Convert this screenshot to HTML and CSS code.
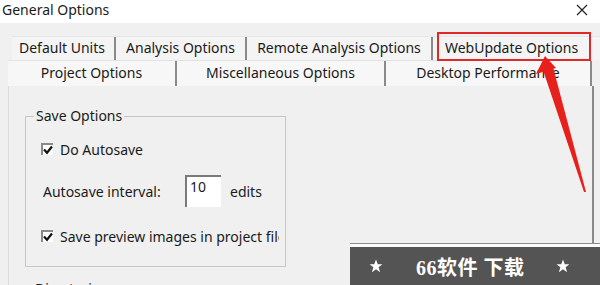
FILE: index.html
```html
<!DOCTYPE html>
<html lang="en">
<head>
  <meta charset="UTF-8">
  <meta name="viewport" content="width=device-width, initial-scale=1.0">
  <title>General Options</title>
  <link rel="stylesheet" href="styles.css">
</head>
<body>
  <div class="window">
    <div class="titlebar">
      <span class="title">General Options</span>
      <svg class="close" width="12" height="12" viewBox="0 0 12 12">
        <path d="M1 1 L11 11 M11 1 L1 11" stroke="#222" stroke-width="1.2" fill="none"/>
      </svg>
    </div>

    <div class="tabs">
      <div class="tab-row row-back">
        <div class="tab t-units">Default Units</div>
        <div class="tab t-analysis">Analysis Options</div>
        <div class="tab t-remote">Remote Analysis Options</div>
        <div class="tab t-web">WebUpdate Options</div>
      </div>
      <div class="tab-row row-front">
        <div class="tab t-project">Project Options</div>
        <div class="tab t-misc">Miscellaneous Options</div>
        <div class="tab t-desktop">Desktop Performance</div>
      </div>
    </div>

    <div class="page">
      <fieldset class="group">
        <legend>Save Options</legend>
        <div class="check-row">
          <span class="checkbox">
            <svg width="12" height="12" viewBox="0 0 12 12">
              <path d="M2 5.5 L5 8.8 L10 2.5" stroke="#111" stroke-width="2.2" fill="none"/>
            </svg>
          </span>
          <span>Do Autosave</span>
        </div>
        <div class="field-row">
          <span class="field-label">Autosave interval:</span>
          <span class="num-input">10</span>
          <span>edits</span>
        </div>
        <div class="check-row">
          <span class="checkbox">
            <svg width="12" height="12" viewBox="0 0 12 12">
              <path d="M2 5.5 L5 8.8 L10 2.5" stroke="#111" stroke-width="2.2" fill="none"/>
            </svg>
          </span>
          <span class="clip">Save preview images in project files</span>
        </div>
      </fieldset>
      <div class="next-group">Directories</div>
    </div>

    <div class="highlight"></div>
    <svg class="arrow" width="600" height="285" viewBox="0 0 600 285">
      <polygon points="545,56 536,74 556,68" fill="#e8201c"/>
      <polygon points="543,70 553,67 586,192 584,192" fill="#e8201c"/>
    </svg>

    <div class="watermark">
      <svg class="star" width="14" height="14" viewBox="0 0 24 24">
        <polygon points="12,1 15,9 23,9 16.5,14 19,22.5 12,17.5 5,22.5 7.5,14 1,9 9,9" fill="#fff"/>
      </svg>
      <span class="wm-text">66软件 下载</span>
      <svg class="star" width="14" height="14" viewBox="0 0 24 24">
        <polygon points="12,1 15,9 23,9 16.5,14 19,22.5 12,17.5 5,22.5 7.5,14 1,9 9,9" fill="#fff"/>
      </svg>
    </div>
  </div>
</body>
</html>
```

FILE: styles.css
```css
body {
  margin: 0;
  font-family: "Noto Sans", "Open Sans", sans-serif;
  font-size: 14px;
  color: #1a1a1a;
}
.window {
  position: relative;
  width: 600px;
  height: 285px;
  overflow: hidden;
  background: #f0f0f0;
}
.titlebar {
  height: 23px;
  background: #fff;
  display: flex;
  align-items: center;
  justify-content: space-between;
  padding: 0 12px 4px 2px;
  box-sizing: border-box;
}
.title {
  font-size: 14px;
}
.tabs {
  padding-top: 13px;
}
.tab-row {
  display: flex;
}
.row-back {
  margin-left: 12px;
  height: 24px;
  background: #f4f4f4;
  border-top: 1px solid #e6e6e6;
  box-sizing: border-box;
}
.row-front {
  margin-left: 8px;
  width: 584px;
  height: 26px;
  background: #f7f7f7;
  border-top: 1px solid #e2e2e2;
  box-sizing: border-box;
}
.tab {
  display: flex;
  align-items: center;
  justify-content: center;
  box-sizing: border-box;
  white-space: nowrap;
}
.row-back .tab {
  padding-bottom: 3px;
}
.row-front .tab {
  padding-bottom: 2px;
}
.t-units { width: 104px; border-right: 2px solid #8a8a8a; padding-right: 2px; }
.t-analysis { width: 131px; border-right: 2px solid #8a8a8a; }
.t-remote { width: 186px; border-right: 2px solid #8a8a8a; }
.t-web { width: 157px; }
.t-project { width: 169px; border-right: 2px solid #8a8a8a; }
.t-misc { width: 209px; border-right: 2px solid #8a8a8a; }
.t-desktop { width: 206px; border-right: 2px solid #8a8a8a; }

.page {
  margin-left: 8px;
  width: 586px;
  height: 200px;
  box-sizing: border-box;
  border-left: 1px solid #dcdcdc;
  border-right: 2px solid #8a8a8a;
  padding: 21px 0 0 16px;
}
.group {
  margin: 0;
  width: 261px;
  box-sizing: border-box;
  border: 1px solid #c6c6c6;
  padding: 14px 0 20px 15px;
}
.group legend {
  padding: 0 2px;
  margin-left: -7px;
  line-height: 18px;
}
.check-row {
  display: flex;
  align-items: center;
  height: 20px;
  gap: 7px;
}
.checkbox {
  width: 12px;
  height: 12px;
  box-sizing: border-box;
  border-left: 2px solid #8a8a8a;
  border-top: 2px solid #8a8a8a;
  background: #fff;
  display: flex;
  align-items: center;
  justify-content: center;
}
.checkbox svg {
  flex-shrink: 0;
}
.field-row {
  display: flex;
  align-items: center;
  height: 32px;
  margin: 16px 0 19px 2px;
}
.field-label {
  width: 142px;
}
.num-input {
  width: 36px;
  height: 32px;
  box-sizing: border-box;
  background: #fff;
  border-left: 2px solid #7a7a7a;
  border-top: 2px solid #7a7a7a;
  padding: 0 0 0 3px;
  line-height: 20px;
  margin-right: 9px;
  align-self: flex-start;
}
.clip {
  width: 219px;
  overflow: hidden;
  white-space: nowrap;
}
.next-group {
  margin: 12px 0 0 10px;
}

.highlight {
  position: absolute;
  left: 437px;
  top: 32px;
  width: 154px;
  height: 29px;
  box-sizing: border-box;
  border: 2px solid #e02828;
}
.arrow {
  position: absolute;
  left: 0;
  top: 0;
  pointer-events: none;
}
.watermark {
  position: absolute;
  left: 350px;
  top: 243px;
  width: 250px;
  height: 42px;
  box-sizing: border-box;
  border-top: 1px solid #8c8c8c;
  box-shadow: inset 0 3px 0 #fafafa;
  padding-top: 3px;
  background: #545454;
  background-clip: content-box;
  display: flex;
  align-items: center;
  color: #fff;
}
.watermark .star:first-child {
  margin-left: 19px;
}
.wm-text {
  font-family: "Liberation Serif", "Noto Sans CJK SC", serif;
  font-weight: bold;
  font-size: 20px;
  margin: 0 31px 0 33px;
  letter-spacing: 0.5px;
}
```
